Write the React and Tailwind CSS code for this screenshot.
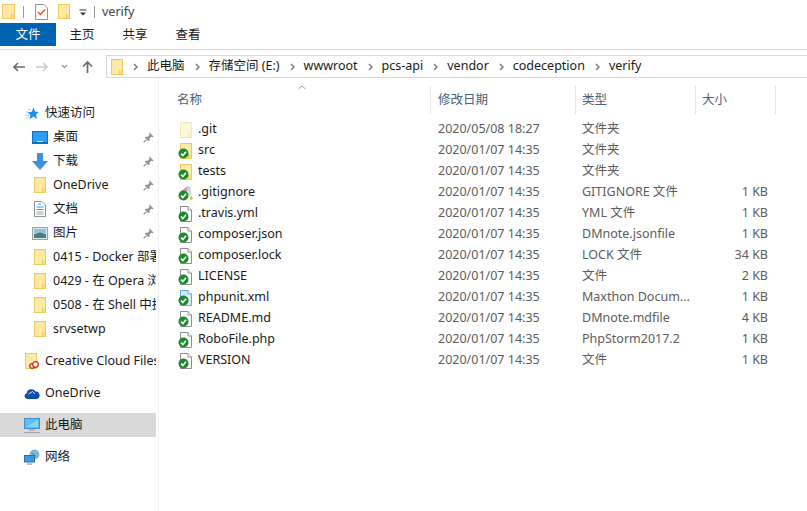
function Folder({ w = 12, h = 16, pale = false, className = "" }) {
  const edge = pale ? "#f7e8b8" : "#eccb5c";
  return (
    <svg width={w} height={h} viewBox={`0 0 ${w} ${h}`} className={className}>
      <rect x="0.5" y="0.5" width={w - 1} height={h - 1} fill={pale ? "#fdf5dc" : "#fee9a8"} />
      <rect x={w - 3} y={h - 5} width="2.5" height="4.5" fill={pale ? "#fbeec4" : "#fbdc80"} />
      <path d={`M${w - 3.5} ${h - 5}V${h - 0.5}`} stroke={edge} />
      <rect x="0.5" y="0.5" width={w - 1} height={h - 1} fill="none" stroke={edge} />
    </svg>
  );
}
function Check() {
  return (
    <svg width="11" height="11" viewBox="0 0 11 11" className="absolute left-[-2px] bottom-0">
      <circle cx="5.5" cy="5.5" r="5" fill="#1b8a2a" />
      <path d="M3 5.6L4.9 7.6L8 3.8" fill="none" stroke="#fff" strokeWidth="1.6" />
    </svg>
  );
}
function Doc({ tint }) {
  const s = tint ? "#6aa8e0" : "#8f8f8f";
  return (
    <svg width="12" height="16" viewBox="0 0 12 16">
      <path d="M0.5 0.5H8L11.5 4V15.5H0.5Z" fill={tint ? "#d8e9fa" : "#fff"} stroke={s} />
      <path d="M8 0.5V4H11.5" fill="#fff" stroke={s} />
    </svg>
  );
}
function FileIcon({ kind }) {
  return (
    <span className="relative w-[12px] h-[16px] flex items-center justify-center shrink-0">
      {kind === "pale" && <Folder pale />}
      {kind === "folder" && <Folder />}
      {kind === "doc" && <Doc />}
      {kind === "xml" && <Doc tint />}
      {kind === "git" && (
        <svg width="14" height="16" viewBox="0 0 14 16" className="shrink-0">
          <path d="M1 7L8.5 1L11 3L4 11Z" fill="#e89a9a" />
          <path d="M8.5 1L11.5 1.5L12.5 10L10 11L8 3Z" fill="#c8d4ec" />
          <path d="M10.5 13H14M12.2 11V15" stroke="#e8c040" strokeWidth="1.5" />
        </svg>
      )}
      {kind !== "pale" && <Check />}
    </span>
  );
}
function Pin() {
  return (
    <svg width="11" height="11" viewBox="0 0 11 11" className="absolute right-[2px] top-[7px]">
      <path d="M6.5 0.5L10.5 4.5L9.3 5.2L8.3 4.8L6.3 6.8L6.6 8.6L5.6 9.4L1.8 5.6L2.6 4.6L4.4 4.9L6.4 2.9L6 1.7Z" fill="#8d96a0" />
      <path d="M3.4 7.6L0.6 10.4" stroke="#8d96a0" strokeWidth="1.2" />
    </svg>
  );
}
function NavIcon({ kind }) {
  if (kind === "star") return (
    <svg width="14" height="13" viewBox="0 0 14 13">
      <path d="M8.5 0.5L10 4.6L14 5L10.9 7.7L12 12L8.3 9.6L4.4 12.4L5.5 8L2.6 5.2L6.8 4.7Z" fill="#1f8fe8" />
      <path d="M3 2.5H6M1 5H3M0.5 8.5H4M1 11H3.5" stroke="#9fd0f5" />
    </svg>
  );
  if (kind === "desktop") return (
    <svg width="16" height="13" viewBox="0 0 16 13"><rect width="16" height="13" fill="#0b6fc4" /><rect x="1" y="1" width="14" height="10" fill="#2f9cf0" /><path d="M5 10.5H11" stroke="#cfe8ff" /></svg>
  );
  if (kind === "down") return (
    <svg width="16" height="17" viewBox="0 0 16 17"><path d="M5 0H11V8H16L8 17L0 8H5Z" fill="#3d8fe0" /></svg>
  );
  if (kind === "docs") return (
    <svg width="12" height="16" viewBox="0 0 12 16"><path d="M0.5 0.5H8L11.5 4V15.5H0.5Z" fill="#fff" stroke="#909090" /><path d="M4 3H7M2.5 6H9.5M2.5 8.5H9.5" stroke="#2f9ce0" /><path d="M2.5 11H9.5M2.5 13H9.5" stroke="#8aa" /></svg>
  );
  if (kind === "pics") return (
    <svg width="16" height="13" viewBox="0 0 16 13"><rect x="0.5" y="0.5" width="15" height="12" fill="#dcecf7" stroke="#a0a0a0" /><rect x="2" y="2" width="12" height="4" fill="#8fc0e0" /><path d="M2 7L8 5.5L14 7V11H2Z" fill="#4f7f78" /></svg>
  );
  if (kind === "cc") return (
    <span className="relative flex mr-[2px]"><Folder />
      <svg width="10" height="8" viewBox="0 0 10 8" className="absolute right-[-2px] bottom-0"><circle cx="3" cy="5" r="2.3" fill="none" stroke="#d8261c" strokeWidth="1.3" /><circle cx="6.5" cy="3.5" r="2.8" fill="#fff" stroke="#d8261c" strokeWidth="1.3" /></svg>
    </span>
  );
  if (kind === "cloud") return (
    <svg width="16" height="11" viewBox="0 0 16 11"><path d="M3 11A3 3 0 0 1 2.6 5.2A4.8 4.8 0 0 1 11.5 3.6A3.8 3.8 0 0 1 13 11Z" fill="#0f4fa8" /><path d="M4.5 6L8.5 3.5L11 6" fill="none" stroke="#fff" strokeWidth="0.8" /></svg>
  );
  if (kind === "pc") return (
    <svg width="16" height="15" viewBox="0 0 16 15"><rect x="0.5" y="0.5" width="15" height="10" fill="#5cc0f5" stroke="#3d90cc" /><path d="M2 9L14 2V9Z" fill="#8ad6fb" /><path d="M5 12H11" stroke="#9ab" strokeWidth="1.4" /><path d="M0 14.5H16" stroke="#9ab" /></svg>
  );
  if (kind === "net") return (
    <svg width="16" height="16" viewBox="0 0 16 16"><circle cx="10.5" cy="5.5" r="5" fill="#7fb4de" /><path d="M7 3L12 6L10 10" fill="#6ba56f" /><rect x="0.5" y="6.5" width="10" height="6.5" fill="#3a9ae0" stroke="#2a70b0" /><path d="M3 15H8" stroke="#8aa" strokeWidth="1.3" /></svg>
  );
  return <Folder />;
}
function NavRow({ icon, label, indent, pin, active, top }) {
  return (
    <div className={`relative h-6 flex items-center shrink-0 overflow-hidden ${active ? "bg-[#d9d9d9]" : ""} ${top ? "mt-2" : ""}`}>
      <span className={`flex justify-center shrink-0 w-[16px] mr-[5px] ${indent ? "ml-[32px]" : "ml-[24px]"}`}><NavIcon kind={icon} /></span>
      <span className="whitespace-nowrap text-[#1a1a1a] pt-[1px]">{label}</span>
      {pin && <Pin />}
    </div>
  );
}
const files = [
  ["pale", ".git", "2020/05/08 18:27", "文件夹", ""],
  ["folder", "src", "2020/01/07 14:35", "文件夹", ""],
  ["folder", "tests", "2020/01/07 14:35", "文件夹", ""],
  ["git", ".gitignore", "2020/01/07 14:35", "GITIGNORE 文件", "1 KB"],
  ["doc", ".travis.yml", "2020/01/07 14:35", "YML 文件", "1 KB"],
  ["doc", "composer.json", "2020/01/07 14:35", "DMnote.jsonfile", "1 KB"],
  ["doc", "composer.lock", "2020/01/07 14:35", "LOCK 文件", "34 KB"],
  ["doc", "LICENSE", "2020/01/07 14:35", "文件", "2 KB"],
  ["xml", "phpunit.xml", "2020/01/07 14:35", "Maxthon Docum...", "1 KB"],
  ["doc", "README.md", "2020/01/07 14:35", "DMnote.mdfile", "4 KB"],
  ["doc", "RoboFile.php", "2020/01/07 14:35", "PhpStorm2017.2", "1 KB"],
  ["doc", "VERSION", "2020/01/07 14:35", "文件", "1 KB"],
];
const crumbs = ["此电脑", "存储空间 (E:)", "wwwroot", "pcs-api", "vendor", "codeception", "verify"];
function Chevron() {
  return <svg width="5" height="8" viewBox="0 0 5 8" className="shrink-0 ml-[10px] mr-[9px]"><path d="M1 1L4 4L1 7" fill="none" stroke="#777" strokeWidth="1.4" /></svg>;
}
export default function App() {
  return (
    <div className="w-[807px] h-[511px] bg-white overflow-hidden flex flex-col text-[12.5px] text-[#1a1a1a]" style={{ fontFamily: '"Noto Sans","Noto Sans CJK SC",sans-serif' }}>
      <div className="h-[23px] flex items-center shrink-0 pl-[2px]">
        <Folder w={13} h={15} />
        <span className="w-px h-[12px] bg-[#9a9a9a] ml-[8px]" />
        <span className="ml-[11px] flex">
          <svg width="13" height="16" viewBox="0 0 13 16"><path d="M0.5 0.5H9L12.5 4V15.5H0.5Z" fill="#fff" stroke="#909090" /><path d="M3 8L5.5 10.5L10 5.5" fill="none" stroke="#e0552a" strokeWidth="1.4" /></svg>
        </span>
        <span className="ml-[10px] flex"><Folder w={12} h={15} /></span>
        <svg width="8" height="8" viewBox="0 0 8 8" className="ml-[9px] mt-[3px]"><path d="M0.5 1H7.5" stroke="#333" /><path d="M1 3.5H7L4 6.5Z" fill="#333" /></svg>
        <span className="w-px h-[12px] bg-[#9a9a9a] ml-[7px]" />
        <span className="ml-[7px] mt-[2px] text-[#444]">verify</span>
      </div>
      <div className="h-[23px] flex items-center shrink-0">
        <span className="w-[56px] h-full bg-[#0063b1] text-white flex items-center justify-center pt-[1px]">文件</span>
        <span className="w-[52px] text-center pt-[1px]">主页</span>
        <span className="w-[54px] text-center pt-[1px]">共享</span>
        <span className="w-[52px] text-center pt-[1px]">查看</span>
      </div>
      <div className="h-[3px] shrink-0 border-b border-[#dcdcdc] box-content" />
      <div className="h-[28px] flex items-stretch shrink-0 pt-[5px]">
        <div className="w-[106px] flex items-center shrink-0 pl-[13px] gap-[11px]">
          <svg width="12" height="10" viewBox="0 0 12 10"><path d="M5 1L1 5L5 9M1 5H12" fill="none" stroke="#6d6d6d" strokeWidth="1.6" /></svg>
          <svg width="12" height="10" viewBox="0 0 12 10"><path d="M7 1L11 5L7 9M11 5H0" fill="none" stroke="#cfcfcf" strokeWidth="1.6" /></svg>
          <svg width="7" height="5" viewBox="0 0 7 5" className="ml-[2px]"><path d="M1 1L3.5 3.5L6 1" fill="none" stroke="#9a9a9a" strokeWidth="1.3" /></svg>
          <svg width="11" height="12" viewBox="0 0 11 12" className="ml-[3px]"><path d="M1 5.5L5.5 1L10 5.5M5.5 1V12" fill="none" stroke="#6d6d6d" strokeWidth="1.7" /></svg>
        </div>
        <div className="flex-1 border-y border-l border-[#d9d9d9] flex items-center pl-[4px] min-w-0">
          <Folder />
          {crumbs.map((c) => (
            <span key={c} className="flex items-center whitespace-nowrap">
              <Chevron />
              <span>{c}</span>
            </span>
          ))}
        </div>
      </div>
      <div className="flex-1 flex min-h-0">
        <div className="w-[159px] shrink-0 border-r border-[#f0f0f0] pr-[2px] pt-[23px] flex flex-col">
          <NavRow icon="star" label="快速访问" />
          <NavRow icon="desktop" label="桌面" indent pin />
          <NavRow icon="down" label="下载" indent pin />
          <NavRow icon="f" label="OneDrive" indent pin />
          <NavRow icon="docs" label="文档" indent pin />
          <NavRow icon="pics" label="图片" indent pin />
          <NavRow icon="f" label="0415 - Docker 部署" indent />
          <NavRow icon="f" label="0429 - 在 Opera 浏览" indent />
          <NavRow icon="f" label="0508 - 在 Shell 中执" indent />
          <NavRow icon="f" label="srvsetwp" indent />
          <NavRow icon="cc" label="Creative Cloud Files" top />
          <NavRow icon="cloud" label="OneDrive" top />
          <NavRow icon="pc" label="此电脑" top active />
          <NavRow icon="net" label="网络" top />
        </div>
        <div className="flex-1 min-w-0 flex flex-col">
          <div className="relative h-[38px] mt-[3px] flex shrink-0 text-[#4c607a]">
            <div className="w-[271px] pl-[18px] flex items-center">名称</div>
            <svg width="8" height="5" viewBox="0 0 8 5" className="absolute left-[139px] top-[4px]"><path d="M0.5 4L4 1L7.5 4" fill="none" stroke="#9a9a9a" /></svg>
            <div className="w-[145px] pl-[7px] flex items-center border-l border-[#e5e5e5] my-[5px]">修改日期</div>
            <div className="w-[120px] pl-[6px] flex items-center border-l border-[#e5e5e5] my-[5px]">类型</div>
            <div className="w-[81px] pl-[6px] flex items-center border-x border-[#e5e5e5] my-[5px]">大小</div>
          </div>
          <div className="flex flex-col">
            {files.map(([k, n, d, t, s]) => (
              <div key={n} className="h-[21px] flex items-center">
                <div className="w-[272px] pl-[21px] flex items-center gap-[6px] text-[#1a1a1a]"><FileIcon kind={k} /><span>{n}</span></div>
                <div className="w-[144px] pl-[7px] text-[#5c5c5c]">{d}</div>
                <div className="w-[120px] pl-[7px] text-[#5c5c5c]">{t}</div>
                <div className="w-[73px] text-right text-[#5c5c5c]">{s}</div>
              </div>
            ))}
          </div>
        </div>
      </div>
    </div>
  );
}
